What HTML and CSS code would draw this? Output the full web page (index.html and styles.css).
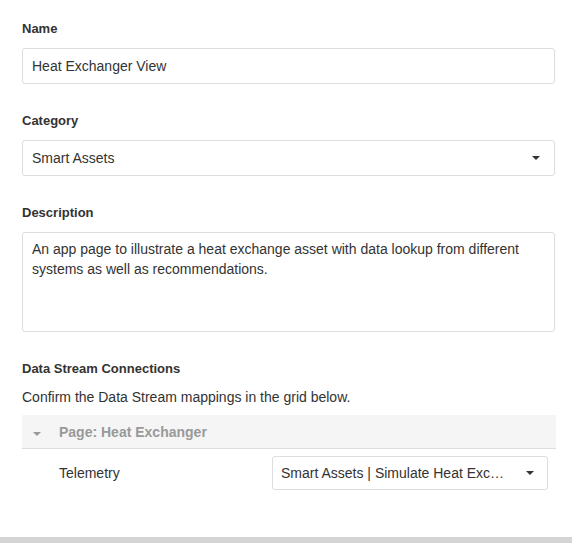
FILE: index.html
```html
<!DOCTYPE html>
<html>
<head>
<meta charset="utf-8">
<link rel="stylesheet" href="styles.css">
</head>
<body>
<div class="page">
  <div class="form">
    <div class="field">
      <label class="label">Name</label>
      <div class="input">Heat Exchanger View</div>
    </div>
    <div class="field">
      <label class="label">Category</label>
      <div class="input select"><span>Smart Assets</span><span class="caret"></span></div>
    </div>
    <div class="field">
      <label class="label">Description</label>
      <div class="textarea">An app page to illustrate a heat exchange asset with data lookup from different systems as well as recommendations.</div>
    </div>
    <div class="section">
      <div class="label">Data Stream Connections</div>
      <p class="hint">Confirm the Data Stream mappings in the grid below.</p>
      <div class="grid">
        <div class="grid-head">
          <span class="head-caret"></span>
          <span class="head-title">Page: Heat Exchanger</span>
        </div>
        <div class="grid-row">
          <span class="row-name">Telemetry</span>
          <div class="input select small"><span class="ellip">Smart Assets | Simulate Heat Exchanger</span><span class="caret"></span></div>
        </div>
      </div>
    </div>
  </div>
  <div class="bottom-bar"></div>
</div>
</body>
</html>
```
FILE: styles.css
```css
* { box-sizing: border-box; }
html, body { margin: 0; padding: 0; background: #fff; }
body {
  font-family: "Liberation Sans", Arial, sans-serif;
  color: #333;
  font-size: 14px;
}
.page {
  width: 572px;
  height: 543px;
  display: flex;
  flex-direction: column;
}
.form {
  flex: 1;
  padding: 20px 17px 0 22px;
  display: flex;
  flex-direction: column;
  gap: 28px;
}
.field { display: flex; flex-direction: column; gap: 10px; }
.label {
  display: block;
  font-size: 13px;
  font-weight: bold;
  line-height: 18px;
  color: #333;
}
.input {
  height: 36px;
  border: 1px solid #ddd;
  border-radius: 3px;
  padding: 0 9px;
  display: flex;
  align-items: center;
  font-size: 14px;
  line-height: 20px;
  color: #333;
}
.select { justify-content: space-between; padding-right: 14px; }
.caret {
  width: 0; height: 0;
  border-left: 4px solid transparent;
  border-right: 4px solid transparent;
  border-top: 4px solid #333;
  flex: none;
}
.textarea {
  height: 100px;
  border: 1px solid #ddd;
  border-radius: 3px;
  padding: 6px 9px;
  font-size: 14px;
  line-height: 20px;
  color: #333;
}
.section { display: flex; flex-direction: column; }
.hint { margin: 9px 0 8px; font-size: 14px; line-height: 20px; }
.grid { margin-right: -1px; }
.grid-head {
  height: 34px;
  background: #f5f5f5;
  border-bottom: 1px solid #ddd;
  display: flex;
  align-items: center;
  padding-left: 11px;
}
.head-caret {
  width: 0; height: 0;
  border-left: 4px solid transparent;
  border-right: 4px solid transparent;
  border-top: 4px solid #999;
  margin-top: 4px;
}
.head-title {
  margin-left: 18px;
  font-weight: bold;
  color: #999;
  font-size: 14px;
}
.grid-row {
  display: flex;
  align-items: center;
  justify-content: space-between;
  padding: 7px 8px 7px 37px;
}
.small {
  width: 276px;
  height: 34px;
  padding-left: 8px;
  padding-right: 13px;
}
.ellip {
  white-space: nowrap;
  overflow: hidden;
  text-overflow: ellipsis;
  max-width: 226px;
}
.bottom-bar {
  height: 6px;
  background: #d4d4d4;
  flex: none;
}
```
